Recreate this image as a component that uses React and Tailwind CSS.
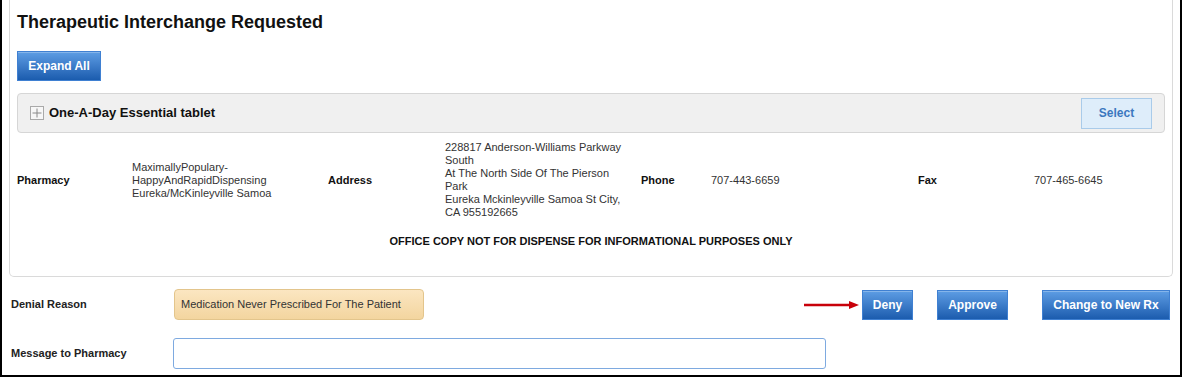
import React from 'react';

const blueBtn =
  'h-[30px] border border-[#3f80d2] bg-gradient-to-b from-[#5d9de4] to-[#1b5cae] text-[12px] font-bold text-white shadow-[inset_0_1px_0_rgba(255,255,255,0.25)]';

const details = [
  { label: 'Pharmacy', value: ['MaximallyPopulary-HappyAndRapidDispensing', 'Eureka/McKinleyville Samoa'] },
  {
    label: 'Address',
    value: [
      '228817 Anderson-Williams Parkway South',
      'At The North Side Of The Pierson Park',
      'Eureka Mckinleyville Samoa St City, CA 955192665',
    ],
  },
  { label: 'Phone', value: ['707-443-6659'] },
  { label: 'Fax', value: ['707-465-6645'] },
];

function PlusBox() {
  return (
    <span className="flex h-[14px] w-[14px] items-center justify-center border border-[#a9a9a9] bg-[#f7f7f7]">
      <svg width="10" height="10" viewBox="0 0 10 10">
        <path d="M5 0.5v9M0.5 5h9" stroke="#8a8a8a" strokeWidth="1" />
      </svg>
    </span>
  );
}

function RedArrow() {
  return (
    <svg width="56" height="10" viewBox="0 0 56 10" className="mr-[2px]">
      <path d="M0 5h47" stroke="#c8000a" strokeWidth="2.5" />
      <path d="M45 1l10 4-10 4z" fill="#c8000a" />
    </svg>
  );
}

export default function App() {
  return (
    <div className="h-[377px] w-[1182px] overflow-hidden border-x-2 border-b-2 border-black bg-white font-['Liberation_Sans',Arial,sans-serif] text-[#111]">
      {/* request card */}
      <div className="mx-[7px] h-[277px] rounded-b-[5px] border border-t-0 border-[#dadada] px-[7px] pt-[12px]">
        <h1 className="text-[18px] leading-[21px] font-bold">Therapeutic Interchange Requested</h1>
        <button className={`${blueBtn} mt-[18px] w-[84px]`}>Expand All</button>

        <div className="mt-[12px] flex h-[40px] items-center rounded-[4px] border border-[#d6d6d6] bg-[#f0f0f0] pr-[12px] pl-[12px]">
          <PlusBox />
          <span className="ml-[5px] text-[13px] font-bold">One-A-Day Essential tablet</span>
          <button className="ml-auto h-[31px] w-[71px] border border-[#a9cbea] bg-[#deedfa] text-[12px] font-bold text-[#3b78bf]">
            Select
          </button>
        </div>

        <div className="mt-[8px] grid grid-cols-[115px_196px_117px_196px_70px_207px_116px_1fr] items-center text-[11px] leading-[13px]">
          {details.map((d) => (
            <React.Fragment key={d.label}>
              <div className="font-bold text-[#111]">{d.label}</div>
              <div className="w-[185px] text-[#333]">
                {d.value.map((v) => (
                  <div key={v}>{v}</div>
                ))}
              </div>
            </React.Fragment>
          ))}
        </div>

        <p className="mt-[16px] text-center text-[11px] leading-[13px] font-bold">
          OFFICE COPY NOT FOR DISPENSE FOR INFORMATIONAL PURPOSES ONLY
        </p>
      </div>

      {/* action rows */}
      <div className="pr-[10px] pl-[9px]">
        <div className="mt-[12px] flex items-center">
          <div className="w-[163px] text-[11px] font-bold text-[#222]">Denial Reason</div>
          <div className="flex h-[31px] w-[250px] items-center rounded-[4px] border border-[#e3c58c] bg-gradient-to-b from-[#fbe6c1] to-[#f3d59f] px-[6px] text-[11px] text-[#333]">
            Medication Never Prescribed For The Patient
          </div>
          <div className="ml-auto flex items-center">
            <RedArrow />
            <button className={`${blueBtn} w-[51px]`}>Deny</button>
            <button className={`${blueBtn} ml-[24px] w-[71px]`}>Approve</button>
            <button className={`${blueBtn} ml-[34px] w-[128px]`}>Change to New Rx</button>
          </div>
        </div>

        <div className="mt-[18px] flex items-center">
          <label htmlFor="msg" className="w-[162px] text-[11px] font-bold text-[#222]">
            Message to Pharmacy
          </label>
          <input
            id="msg"
            className="h-[31px] w-[653px] rounded-[3px] border border-[#7eaae0] px-[6px] text-[11px] outline-none"
          />
        </div>
      </div>
    </div>
  );
}
